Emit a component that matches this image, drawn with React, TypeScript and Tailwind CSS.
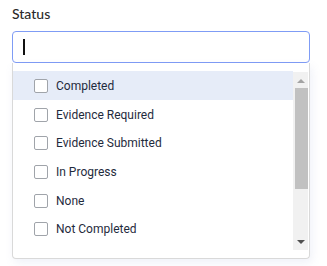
import React from "react";

const items = [
  "Completed",
  "Evidence Required",
  "Evidence Submitted",
  "In Progress",
  "None",
  "Not Completed",
];

export default function App() {
  return (
    <div className="w-[327px] h-[266px] bg-white overflow-hidden" style={{ fontFamily: "Roboto, 'Liberation Sans', sans-serif" }}>
      <div className="pl-[12px] pt-[5px] w-[310px]">
        <div className="text-[14px] leading-[17px] text-[#2b2b2b] font-medium" style={{ fontFamily: "Lato, sans-serif" }}>
          Status
        </div>
        <div className="mt-[9px] h-[32px] border border-[#7f9cf5] rounded-[4px] flex items-center pl-[10px]">
          <div className="w-[1.5px] h-[16px] bg-[#111]" />
        </div>
        <div className="relative h-[196px] border border-t-0 border-[#d9d9d9] rounded-b-[4px] shadow-[2px_4px_10px_rgba(120,140,200,0.12)] flex pt-[8px] pb-[8px] pr-[1px]">
          <div className="flex-1 flex flex-col">
            {items.map((it, i) => (
              <div
                key={it}
                className={`h-[28.6px] flex items-center pl-[21px] pt-[2px] ${i === 0 ? "bg-[#e6ecf8]" : ""}`}
              >
                <div className="w-[14px] h-[14px] border border-[#a0a4aa] rounded-[2px] bg-white" />
                <span className="ml-[8px] text-[12px] text-[#1f2b3d]">{it}</span>
              </div>
            ))}
          </div>
          <div className="w-[15px] mt-[1px] h-[178px] bg-[#f1f1f1] flex flex-col items-center">
            <div className="h-[16px] flex items-center justify-center pt-[1px]">
              <div className="w-0 h-0 border-l-[4px] border-r-[4px] border-b-[4px] border-l-transparent border-r-transparent border-b-[#a3a3a3]" />
            </div>
            <div className="w-[13px] ml-[2px] h-[101px] bg-[#c1c1c1]" />
            <div className="flex-1" />
            <div className="h-[16px] flex items-center justify-center pb-[1px]">
              <div className="w-0 h-0 border-l-[4px] border-r-[4px] border-t-[4px] border-l-transparent border-r-transparent border-t-[#505050]" />
            </div>
          </div>
        </div>
      </div>
    </div>
  );
}
